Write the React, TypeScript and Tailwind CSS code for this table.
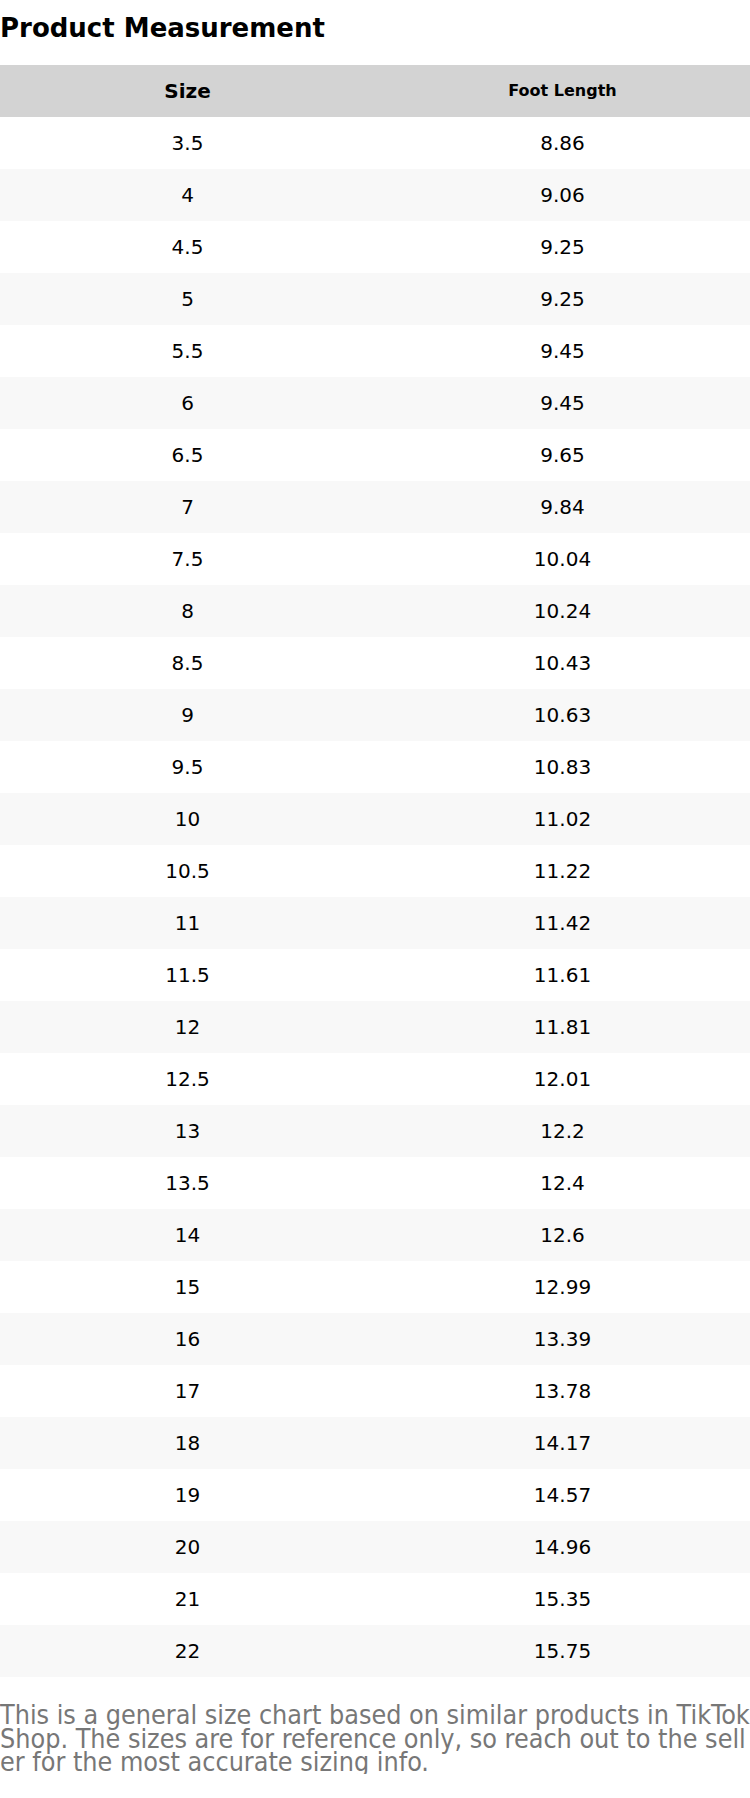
const rows: [string, string][] = [
  ["3.5", "8.86"],
  ["4", "9.06"],
  ["4.5", "9.25"],
  ["5", "9.25"],
  ["5.5", "9.45"],
  ["6", "9.45"],
  ["6.5", "9.65"],
  ["7", "9.84"],
  ["7.5", "10.04"],
  ["8", "10.24"],
  ["8.5", "10.43"],
  ["9", "10.63"],
  ["9.5", "10.83"],
  ["10", "11.02"],
  ["10.5", "11.22"],
  ["11", "11.42"],
  ["11.5", "11.61"],
  ["12", "11.81"],
  ["12.5", "12.01"],
  ["13", "12.2"],
  ["13.5", "12.4"],
  ["14", "12.6"],
  ["15", "12.99"],
  ["16", "13.39"],
  ["17", "13.78"],
  ["18", "14.17"],
  ["19", "14.57"],
  ["20", "14.96"],
  ["21", "15.35"],
  ["22", "15.75"],
];

export default function App() {
  return (
    <div className="w-[750px] bg-white text-black font-['DejaVu_Sans',sans-serif]">
      {/* title */}
      <h1 className="text-[26px] font-bold leading-[56px] h-[65px]">Product Measurement</h1>

      {/* table */}
      <div className="grid grid-cols-2 h-[52px] items-center bg-[#d3d3d3] font-bold text-center">
        <div className="text-[20px]">Size</div>
        <div className="text-[16px]">Foot Length</div>
      </div>
      {rows.map(([size, len], i) => (
        <div
          key={size}
          className={
            i % 2 === 0
              ? "grid grid-cols-2 h-[52px] items-center text-center text-[20px] bg-white"
              : "grid grid-cols-2 h-[52px] items-center text-center text-[20px] bg-[#f8f8f8]"
          }
        >
          <div>{size}</div>
          <div>{len}</div>
        </div>
      ))}

      {/* note */}
      <p className="mt-[26px] text-[26.7px] leading-[23.5px] text-[#777] break-all font-['DejaVu_Sans_Condensed','DejaVu_Sans',sans-serif]">
        This is a general size chart based on similar products in TikTok Shop. The sizes are for reference only, so reach out to the seller for the most accurate sizing info.
      </p>
    </div>
  );
}
